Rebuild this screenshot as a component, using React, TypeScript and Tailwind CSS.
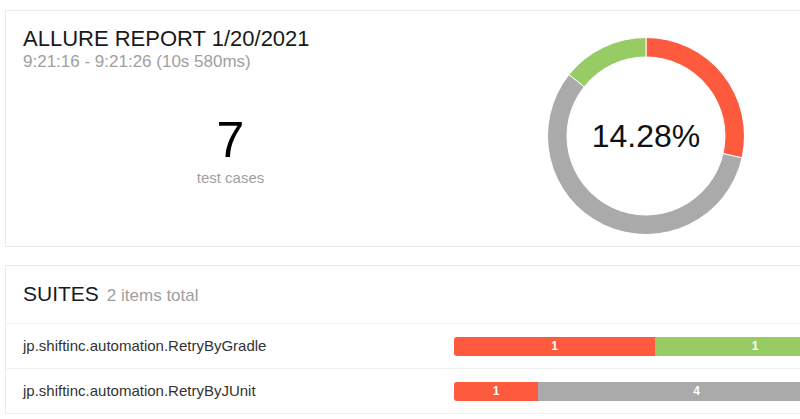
import React from 'react'

const segments = [
  { from: 0, to: 2 / 7, color: '#fd5a3e' },
  { from: 2 / 7, to: 6 / 7, color: '#aaaaaa' },
  { from: 6 / 7, to: 1, color: '#97cc64' },
]

const suites = [
  { name: 'jp.shiftinc.automation.RetryByGradle', parts: [{ w: 201, n: 1, c: 'bg-[#fd5a3e]' }, { w: 200, n: 1, c: 'bg-[#97cc64]' }] },
  { name: 'jp.shiftinc.automation.RetryByJUnit', parts: [{ w: 84, n: 1, c: 'bg-[#fd5a3e]' }, { w: 317, n: 4, c: 'bg-[#aaaaaa]' }] },
]

const pt = (f: number, r: number) => {
  const a = f * Math.PI * 2
  return [100 + r * Math.sin(a), 100 - r * Math.cos(a)]
}

const arc = (from: number, to: number) => {
  const R = 98.5
  const r = 79
  const large = to - from > 0.5 ? 1 : 0
  const [x1, y1] = pt(from, R)
  const [x2, y2] = pt(to, R)
  const [x3, y3] = pt(to, r)
  const [x4, y4] = pt(from, r)
  return `M${x1} ${y1} A${R} ${R} 0 ${large} 1 ${x2} ${y2} L${x3} ${y3} A${r} ${r} 0 ${large} 0 ${x4} ${y4} Z`
}

const Donut = () => (
  <div className="relative w-[200px] h-[200px]">
    <svg width="200" height="200" viewBox="0 0 200 200">
      {segments.map((s, i) => (
        <path key={i} d={arc(s.from, s.to)} fill={s.color} stroke="#fff" strokeWidth="1" />
      ))}
    </svg>
    <div className="absolute inset-0 flex items-center justify-center text-[32px] leading-none text-[#111]">14.28%</div>
  </div>
)

export default function App() {
  return (
    <div className="w-[800px] h-[419px] overflow-hidden bg-white font-['Liberation_Sans',Arial,sans-serif]">
      <div className="ml-[5px] mt-[10px] w-[900px] h-[237px] border border-[#ebebeb] flex">
        <div className="w-[449px] flex flex-col pl-[17px] pt-[17px]">
          <h1 className="text-[22px] leading-none text-[#1a1a1a]">ALLURE REPORT 1/20/2021</h1>
          <div className="mt-[3px] text-[17px] leading-none text-[#a0a0a0]">9:21:16 - 9:21:26 (10s 580ms)</div>
          <div className="mt-[45px] -ml-[17px] flex flex-col items-center">
            <div className="text-[50px] leading-none text-black">7</div>
            <div className="mt-[5px] text-[15px] leading-none text-[#a0a0a0]">test cases</div>
          </div>
        </div>
        <div className="w-[382px] flex justify-center pt-[25px]">
          <Donut />
        </div>
      </div>

      <div className="ml-[5px] mt-[18px] w-[900px] border border-[#ebebeb] border-b-0">
        <div className="h-[58px] border-b border-[#f0f0f0] flex items-baseline pl-[17px] pt-[17px]">
          <span className="text-[21px] leading-none text-[#1a1a1a]">SUITES</span>
          <span className="ml-[8px] text-[17px] leading-none text-[#a0a0a0]">2 items total</span>
        </div>
        {suites.map((s) => (
          <div key={s.name} className="h-[45px] border-b border-[#f0f0f0] flex items-center">
            <div className="w-[448px] pl-[17px] text-[15px] text-[#333]">{s.name}</div>
            <div className="flex h-[19px] rounded-[3px] overflow-hidden">
              {s.parts.map((p, i) => (
                <div
                  key={i}
                  className={`${p.c} h-full flex items-center justify-center text-white text-[12px] font-bold leading-none`}
                  style={{ width: p.w }}
                >
                  {p.n}
                </div>
              ))}
            </div>
          </div>
        ))}
      </div>
    </div>
  )
}
